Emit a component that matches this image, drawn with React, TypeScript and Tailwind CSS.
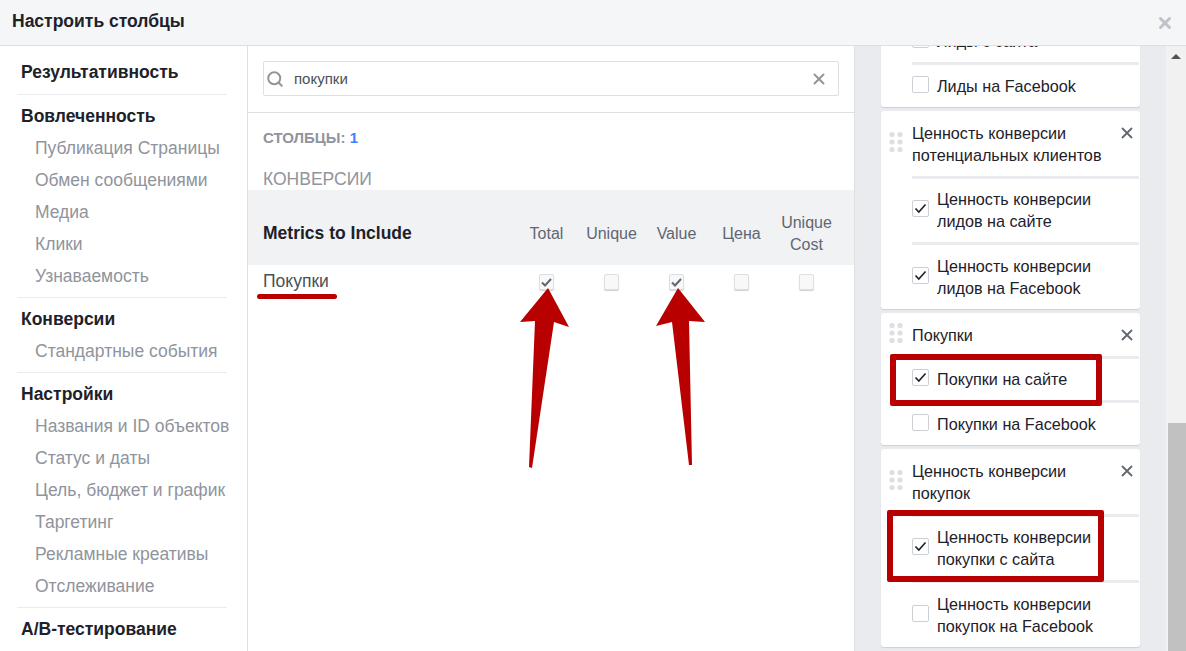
import React from 'react';
import { Search, X } from 'lucide-react';

interface SideSection {
  title: string;
  items: string[];
}

interface CardRow {
  label: string[];
  checked?: boolean;
}

interface CardData {
  title: string[];
  rows: CardRow[];
}

const sections: SideSection[] = [
  { title: 'Результативность', items: [] },
  { title: 'Вовлеченность', items: ['Публикация Страницы', 'Обмен сообщениями', 'Медиа', 'Клики', 'Узнаваемость'] },
  { title: 'Конверсии', items: ['Стандартные события'] },
  {
    title: 'Настройки',
    items: ['Названия и ID объектов', 'Статус и даты', 'Цель, бюджет и график', 'Таргетинг', 'Рекламные креативы', 'Отслеживание'],
  },
  { title: 'A/B-тестирование', items: [] },
];

// first card is scrolled under the header, so its title never shows
const cards: CardData[] = [
  {
    title: [],
    rows: [{ label: ['Лиды с сайта'] }, { label: ['Лиды на Facebook'] }],
  },
  {
    title: ['Ценность конверсии', 'потенциальных клиентов'],
    rows: [
      { label: ['Ценность конверсии', 'лидов на сайте'], checked: true },
      { label: ['Ценность конверсии', 'лидов на Facebook'], checked: true },
    ],
  },
  {
    title: ['Покупки'],
    rows: [{ label: ['Покупки на сайте'], checked: true }, { label: ['Покупки на Facebook'] }],
  },
  {
    title: ['Ценность конверсии', 'покупок'],
    rows: [
      { label: ['Ценность конверсии', 'покупки с сайта'], checked: true },
      { label: ['Ценность конверсии', 'покупок на Facebook'] },
    ],
  },
];

const columns = [['Total'], ['Unique'], ['Value'], ['Цена'], ['Unique', 'Cost']];
const rowChecks = [true, false, true, false, false];

function DragDots() {
  return (
    <svg width="14" height="21" viewBox="0 0 14 21" className="absolute -left-[23px] top-1/2 -mt-[2px] -translate-y-1/2 fill-[#dddfe2]">
      <circle cx="3" cy="3" r="2.6" />
      <circle cx="11" cy="3" r="2.6" />
      <circle cx="3" cy="10.5" r="2.6" />
      <circle cx="11" cy="10.5" r="2.6" />
      <circle cx="3" cy="18" r="2.6" />
      <circle cx="11" cy="18" r="2.6" />
    </svg>
  );
}

function Card({ card }: { card: CardData }) {
  return (
    <div className="relative rounded-[3px] bg-white pl-[31px] shadow-[0_1px_1px_#ccd0d5]">
      <div className="relative pt-[11px] pb-[10px]">
        <DragDots />
        {card.title.map(line => (
          <div key={line} className="h-[22px] leading-[22px]">{line}</div>
        ))}
      </div>
      <svg width="12" height="12" viewBox="0 0 12 12" className="absolute right-[7px] top-[16px] stroke-[#606770] stroke-[1.8]">
        <path d="M1 1 L11 11 M11 1 L1 11" />
      </svg>
      {card.rows.map((row, i) => (
        <div key={row.label.join()} className="mr-px border-t-[3px] border-[#e9ebee]">
          <div className={`flex items-center gap-2 pb-[10px] ${i === 0 ? 'pt-[9px]' : 'pt-[10px]'}`}>
            <span className="mb-[3px] flex h-[17px] w-[17px] items-center justify-center rounded-[2px] border border-[#ccd0d5] bg-white">
              {row.checked && (
                <svg width="13" height="11" viewBox="0 0 13 11" className="fill-none stroke-[#1d2129] stroke-[1.6]">
                  <path d="M1.5 5.5 L4.8 9 L11.5 1.5" />
                </svg>
              )}
            </span>
            <div>
              {row.label.map(line => (
                <div key={line} className="h-[22px] leading-[22px]">{line}</div>
              ))}
            </div>
          </div>
        </div>
      ))}
    </div>
  );
}

function TableCheck({ checked }: { checked: boolean }) {
  return (
    <span className="mx-auto flex h-4 w-[15px] items-center justify-center rounded-[2px] border border-[#dddfe2] bg-[#f8f8f8] shadow-[0_1px_1px_#ccd0d5]">
      {checked && (
        <svg width="11" height="9" viewBox="0 0 11 9" className="fill-none stroke-[#606770] stroke-2">
          <path d="M1 4.5 L4 7.5 L10 1" />
        </svg>
      )}
    </span>
  );
}

export default function App() {
  return (
    <div className="relative flex h-[651px] w-[1186px] flex-col overflow-hidden bg-white font-['Liberation_Sans',Arial,sans-serif] text-[16.2px] text-[#1d2129]">
      <header className="z-10 flex h-[46px] shrink-0 items-center justify-between border-b border-[#dddfe2] bg-[#f5f6f7] pl-3 pr-[12px]">
        <h1 className="pb-[4px] text-[17.5px] font-bold leading-5">Настроить столбцы</h1>
        <X size={18} strokeWidth={4} className="text-[#bec2c9]" />
      </header>

      <div className="flex min-h-0 flex-1">
        <aside className="w-[248px] shrink-0 border-r border-[#dddfe2] pl-[17px] pr-5 pt-[10px] text-[17.5px]">
          {sections.map((section, i) => (
            <div
              key={section.title}
              className={`${i < sections.length - 1 ? 'border-b border-[#e9ebee]' : ''} ${i === 0 ? 'pb-[6px]' : 'pt-[5px] pb-[5px]'}`}
            >
              <div className="h-8 whitespace-nowrap pl-1 font-bold leading-[33px]">{section.title}</div>
              {section.items.map(item => (
                <div key={item} className="h-8 whitespace-nowrap pl-[18px] leading-[33px] text-[#90949c]">{item}</div>
              ))}
            </div>
          ))}
        </aside>

        <main className="w-[607px] shrink-0 border-r border-[#dddfe2]">
          <div className="h-[67px] border-b border-[#dddfe2] px-[15px] pt-[15px]">
            <div className="flex h-[35px] w-[576px] items-center rounded-[2px] border border-[#dddfe2] pl-[2px] pr-[10px]">
              <Search size={18} strokeWidth={2.6} className="text-[#90949c]" />
              <span className="ml-[10px] flex-1 pt-px text-[15px] text-[#4b4f56]">покупки</span>
              <X size={18} strokeWidth={2.5} className="text-[#90949c]" />
            </div>
          </div>
          <div className="px-[15px] pt-[15px] text-[15px] font-bold leading-5 text-[#90949c]">
            СТОЛБЦЫ: <span className="text-[#4080ff]">1</span>
          </div>
          <div className="mt-[20px] h-[22px] px-[15px] text-[17.5px] leading-[22px] text-[#90949c]">КОНВЕРСИИ</div>
          <div className="grid h-[75px] grid-cols-[251px_repeat(5,65px)] items-center bg-[#f1f2f4] px-[15px] pt-[11px] text-[16px]">
            <div className="text-[17.5px] font-bold">Metrics to Include</div>
            {columns.map(col => (
              <div key={col.join()} className="pt-[2px] text-center leading-[22px] text-[#606770]">
                {col.map(line => (
                  <div key={line}>{line}</div>
                ))}
              </div>
            ))}
          </div>
          <div className="grid grid-cols-[251px_repeat(5,65px)] items-center px-[15px] pt-[7px]">
            <div className="pb-[2px] text-[17.5px] leading-[18px] text-[#4b4f56]">Покупки</div>
            {rowChecks.map((checked, i) => (
              <TableCheck key={i} checked={checked} />
            ))}
          </div>
        </main>

        <section className="min-w-0 flex-1 overflow-hidden bg-[#e9ebee] px-[26px]">
          <div className="-mt-[49px] flex flex-col gap-1">
            {cards.map((card, i) => (
              <Card key={i} card={card} />
            ))}
          </div>
        </section>

        <div className="relative w-5 shrink-0 bg-[#f1f1f1]">
          <div className="mx-auto mt-[8px] h-0 w-0 border-x-[5px] border-b-[5px] border-x-transparent border-b-[#505050]" />
          <div className="absolute bottom-0 right-0 h-[228px] w-[18px] bg-[#c1c1c1]" />
        </div>
      </div>

      {/* red annotations drawn over the screenshot */}
      <svg width="1186" height="651" viewBox="0 0 1186 651" className="pointer-events-none absolute left-0 top-0 z-20 fill-[#b90000]">
        <polygon points="548,288 569,327 554,322 532,468 529,467 535,321 520,322" />
        <polygon points="678,288 705,322 689,321 692,465 689,465 672,322 656,326" />
        <rect x="257" y="294" width="80" height="5" rx="2.5" />
      </svg>
      <div className="pointer-events-none absolute left-[890px] top-[354px] z-20 h-[52px] w-[212px] rounded-[2px] border-[6px] border-[#b90000]" />
      <div className="pointer-events-none absolute left-[887px] top-[510px] z-20 h-[72px] w-[217px] rounded-[2px] border-[6px] border-[#b90000]" />
    </div>
  );
}
